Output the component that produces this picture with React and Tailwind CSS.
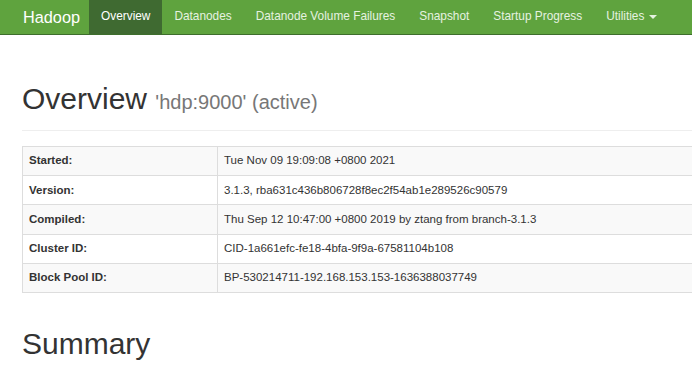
import React from 'react';

const navItems = ['Overview', 'Datanodes', 'Datanode Volume Failures', 'Snapshot', 'Startup Progress'];

const rows = [
  ['Started:', 'Tue Nov 09 19:09:08 +0800 2021'],
  ['Version:', '3.1.3, rba631c436b806728f8ec2f54ab1e289526c90579'],
  ['Compiled:', 'Thu Sep 12 10:47:00 +0800 2019 by ztang from branch-3.1.3'],
  ['Cluster ID:', 'CID-1a661efc-fe18-4bfa-9f9a-67581104b108'],
  ['Block Pool ID:', 'BP-530214711-192.168.153.153-1636388037749'],
];

const App = () => {
  return (
    <div className="w-[692px] h-[369px] overflow-hidden bg-white text-[#333] font-['Liberation_Sans',Arial,sans-serif]">
      <nav className="h-[35px] flex items-stretch bg-[#5fa33e] border-b border-[#3e6e2c] whitespace-nowrap">
        <div className="pl-[23px] pr-[9px] flex items-center text-[16.3px] text-white">Hadoop</div>
        {navItems.map((item, i) => (
          <div
            key={item}
            className={`px-[12px] flex items-center text-[11.85px] ${
              i === 0 ? 'bg-[#3f6a31] text-white' : 'text-[#e6f2e0]'
            }`}
          >
            {item}
          </div>
        ))}
        <div className="px-[12px] flex items-center gap-[5px] text-[11.85px] text-[#e6f2e0]">
          Utilities
          <span className="inline-block w-0 h-0 border-l-[4px] border-r-[4px] border-t-[4px] border-l-transparent border-r-transparent border-t-[#e6f2e0]" />
        </div>
      </nav>

      <div className="pl-[22px]">
        <div className="pt-[46px] pb-[10px] border-b border-[#eee] w-[900px]">
          <h1 className="text-[30px] leading-[36px] font-normal">
            Overview <span className="text-[20px] text-[#777]">'hdp:9000' (active)</span>
          </h1>
        </div>

        <table className="mt-[15px] w-[900px] border-collapse border border-[#ddd] text-[11.5px]">
          <tbody>
            {rows.map(([label, value], i) => (
              <tr key={label} className={`h-[29.2px] ${i % 2 === 0 ? 'bg-[#f9f9f9]' : 'bg-white'}`}>
                <th className="w-[195px] text-left font-bold px-[6px] border border-[#ddd]">{label}</th>
                <td className="px-[6px] border border-[#ddd]">{value}</td>
              </tr>
            ))}
          </tbody>
        </table>

        <h1 className="mt-[33px] text-[30px] leading-[36px] font-normal">Summary</h1>
      </div>
    </div>
  );
};

export default App;
